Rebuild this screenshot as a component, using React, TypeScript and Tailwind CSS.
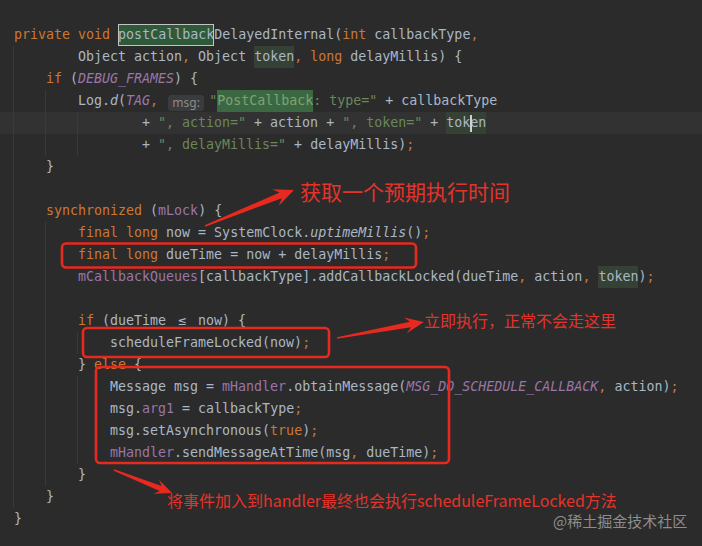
import React from "react";

type Seg = { t: string; c?: string };

const K = "text-[#cc7832]";
const S = "text-[#6a8759]";
const CONST = "text-[#9876aa] italic";
const F = "text-[#9876aa]";
const IT = "italic";

const s = (t: string, c?: string): Seg => ({ t, c });

type Line = {
  indent: number;
  guides: number[];
  segs: Seg[];
  current?: boolean;
};

const lines: Line[] = [
  {
    indent: 0,
    guides: [],
    segs: [
      s("private", K),
      s(" "),
      s("void", K),
      s(" "),
      s("postCallback", "hl1"),
      s("DelayedInternal("),
      s("int", K),
      s(" callbackType"),
      s(",", K),
    ],
  },
  {
    indent: 2,
    guides: [0],
    segs: [
      s("Object action"),
      s(",", K),
      s(" Object "),
      s("token", "hl2"),
      s(",", K),
      s(" "),
      s("long", K),
      s(" delayMillis) {"),
    ],
  },
  { indent: 1, guides: [0], segs: [s("if", K), s(" ("), s("DEBUG_FRAMES", CONST), s(") {")] },
  {
    indent: 2,
    guides: [0, 1],
    segs: [
      s("Log."),
      s("d", IT),
      s("("),
      s("TAG", CONST),
      s(",", K),
      s(" "),
      s("msg:", "inlay"),
      s('"', S),
      s("PostCallback", "hlS"),
      s(': type="', S),
      s(" + callbackType"),
    ],
  },
  {
    indent: 4,
    guides: [0, 1, 2],
    current: true,
    segs: [
      s("+ "),
      s('", action="', S),
      s(" + action + "),
      s('", token="', S),
      s(" + "),
      s("token", "caret"),
    ],
  },
  {
    indent: 4,
    guides: [0, 1, 2],
    segs: [s("+ "), s('", delayMillis="', S), s(" + delayMillis)"), s(";", K)],
  },
  { indent: 1, guides: [0], segs: [s("}")] },
  { indent: 0, guides: [0], segs: [] },
  { indent: 1, guides: [0], segs: [s("synchronized", K), s(" ("), s("mLock", F), s(") {")] },
  {
    indent: 2,
    guides: [0, 1],
    segs: [
      s("final", K),
      s(" "),
      s("long", K),
      s(" now = SystemClock."),
      s("uptimeMillis", IT),
      s("()"),
      s(";", K),
    ],
  },
  {
    indent: 2,
    guides: [0, 1],
    segs: [s("final", K), s(" "), s("long", K), s(" dueTime = now + delayMillis"), s(";", K)],
  },
  {
    indent: 2,
    guides: [0, 1],
    segs: [
      s("mCallbackQueues", F),
      s("[callbackType].addCallbackLocked(dueTime"),
      s(",", K),
      s(" action"),
      s(",", K),
      s(" "),
      s("token", "hl2"),
      s(")"),
      s(";", K),
    ],
  },
  { indent: 0, guides: [0, 1], segs: [] },
  {
    indent: 2,
    guides: [0, 1],
    segs: [s("if", K), s(" (dueTime "), s("≤", "lig"), s(" now) {")],
  },
  { indent: 3, guides: [0, 1, 2], segs: [s("scheduleFrameLocked(now)"), s(";", K)] },
  { indent: 2, guides: [0, 1], segs: [s("} "), s("else", K), s(" {")] },
  {
    indent: 3,
    guides: [0, 1, 2],
    segs: [
      s("Message msg = "),
      s("mHandler", F),
      s(".obtainMessage("),
      s("MSG_DO_SCHEDULE_CALLBACK", CONST),
      s(",", K),
      s(" action)"),
      s(";", K),
    ],
  },
  { indent: 3, guides: [0, 1, 2], segs: [s("msg."), s("arg1", F), s(" = callbackType"), s(";", K)] },
  {
    indent: 3,
    guides: [0, 1, 2],
    segs: [s("msg.setAsynchronous("), s("true", K), s(")"), s(";", K)],
  },
  {
    indent: 3,
    guides: [0, 1, 2],
    segs: [
      s("mHandler", F),
      s(".sendMessageAtTime(msg"),
      s(",", K),
      s(" dueTime)"),
      s(";", K),
    ],
  },
  { indent: 2, guides: [0, 1], segs: [s("}")] },
  { indent: 1, guides: [0], segs: [s("}")] },
  { indent: 0, guides: [], segs: [s("}")] },
];

function Segment({ seg }: { seg: Seg }) {
  switch (seg.c) {
    case "hl1":
      return (
        <span className="inline-block h-[22px] bg-[#2f5a3a] outline outline-1 outline-[#c4c4c4] -outline-offset-1 align-top">
          {seg.t}
        </span>
      );
    case "hl2":
      return <span className="inline-block h-[22px] bg-[#344134] align-top">{seg.t}</span>;
    case "hlS":
      return (
        <span className="inline-block h-[22px] bg-[#3b6843] text-[#7fa36f] align-top">{seg.t}</span>
      );
    case "caret":
      return (
        <span className="relative inline-block h-[22px] bg-[#344134] align-top">
          tok
          <span className="absolute left-[24px] top-[3px] h-[17px] w-[2px] bg-[#d0d0d0]" />
          en
        </span>
      );
    case "lig":
      return <span className="inline-block w-[16px] text-center">{seg.t}</span>;
    case "inlay":
      return (
        <span className="mr-[5px] ml-[2px] inline-flex h-[16px] w-[36px] items-center justify-center rounded-[3px] bg-[#3a3b3c] align-[-2px] font-['Noto_Sans',sans-serif] text-[12px] text-[#8b8b8b]">
          {seg.t}
        </span>
      );
    default:
      return <span className={seg.c}>{seg.t}</span>;
  }
}

// tapered screenshot-tool arrow, tail -> tip
function arrowPoints(
  x1: number,
  y1: number,
  x2: number,
  y2: number,
  head = 18,
  headW = 8,
  neckW = 3,
  tailW = 0.8
) {
  const dx = x2 - x1;
  const dy = y2 - y1;
  const len = Math.hypot(dx, dy);
  const ux = dx / len;
  const uy = dy / len;
  const nx = -uy;
  const ny = ux;
  const bx = x2 - ux * head;
  const by = y2 - uy * head;
  const kx = x2 - ux * head * 0.72;
  const ky = y2 - uy * head * 0.72;
  const pts = [
    [x1 + nx * tailW, y1 + ny * tailW],
    [kx + nx * neckW, ky + ny * neckW],
    [bx + nx * headW, by + ny * headW],
    [x2, y2],
    [bx - nx * headW, by - ny * headW],
    [kx - nx * neckW, ky - ny * neckW],
    [x1 - nx * tailW, y1 - ny * tailW],
  ];
  return pts.map((p) => p.map((v) => v.toFixed(1)).join(",")).join(" ");
}

export default function App() {
  return (
    <div className="relative h-[546px] w-[702px] overflow-hidden bg-[#2b2b2b] font-['DejaVu_Sans_Mono',monospace] text-[13.3px] text-[#a9b7c6]">
      <div className="pt-[24px]">
        {lines.map((line, i) => (
          <div
            key={i}
            className={`h-[22px] whitespace-pre pl-[13px] leading-[22px] ${
              line.current ? "bg-[#323232]" : ""
            }`}
          >
            {Array.from({ length: Math.max(line.indent, line.guides.length) }).map((_, g) => (
              <span
                key={g}
                className={`inline-block h-[22px] w-[32px] align-top ${
                  line.guides.includes(g) ? "border-l border-[#3a3a3a]" : ""
                }`}
              />
            ))}
            {line.segs.length > 0 && <span className="ml-[1px]" />}
            {line.segs.map((seg, j) => (
              <Segment key={j} seg={seg} />
            ))}
          </div>
        ))}
      </div>

      <svg
        className="pointer-events-none absolute inset-0"
        width={702}
        height={546}
        viewBox="0 0 702 546"
      >
        <g fill="none" stroke="#e8291f" strokeWidth={2.6}>
          <rect x={62} y={243.5} width={354} height={24} rx={4} />
          <rect x={83} y={328} width={246} height={29} rx={4} />
          <rect x={96} y={367} width={353} height={96} rx={4} />
        </g>
        <g fill="#e8291f">
          <polygon points={arrowPoints(205, 226, 294, 190, 20, 9, 3, 0.8)} />
          <polygon points={arrowPoints(337, 338, 424, 322, 19, 8, 2.8, 0.8)} />
          <polygon points={arrowPoints(114, 470, 172, 493, 17, 7.5, 2.6, 0.8)} />
        </g>
      </svg>

      <div className="absolute left-[300px] top-[177px] font-['Noto_Sans_CJK_SC',sans-serif] text-[21px] leading-[28px] text-[#e4332a]">
        获取一个预期执行时间
      </div>
      <div className="absolute left-[424px] top-[308px] font-['Noto_Sans_CJK_SC',sans-serif] text-[16px] leading-[24px] text-[#e4332a]">
        立即执行，正常不会走这里
      </div>
      <div className="absolute left-[167px] top-[488px] font-['Noto_Sans_CJK_SC',sans-serif] text-[16px] leading-[24px] text-[#e4332a]">
        将事件加入到handler最终也会执行scheduleFrameLocked方法
      </div>
      <div className="absolute left-[553px] top-[510px] font-['Noto_Sans_CJK_SC',sans-serif] text-[15px] leading-[22px] text-[#8d8d8d]">
        @稀土掘金技术社区
      </div>
    </div>
  );
}
